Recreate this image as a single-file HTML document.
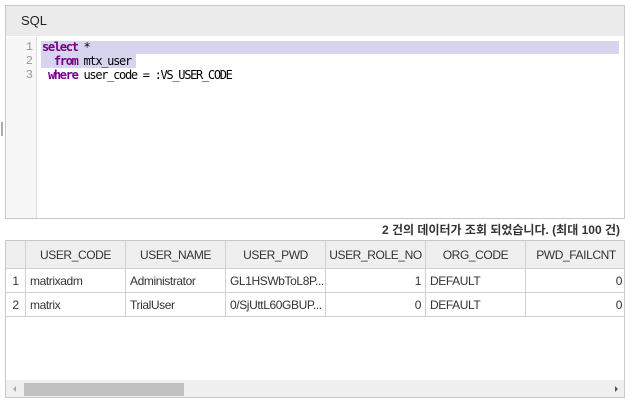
<!DOCTYPE html><html><head><style>
body{margin:0;width:629px;height:400px;background:#fff;font-family:"Liberation Sans","Noto Sans CJK KR",sans-serif;position:relative;overflow:hidden}
.a{position:absolute}
.sql{left:5px;top:5px;width:618px;height:212px;border:1px solid #c8c8c8}
.hd{left:0;top:0;width:618px;height:30px;background:#ebebeb;font-size:13px;line-height:30px;padding-left:15px;box-sizing:border-box;color:#222}
.gut{left:0;top:31px;width:30px;height:181px;background:#f7f7f7;border-right:1px solid #ddd}
.ln{width:27px;text-align:right;font:12px "Liberation Mono",monospace;color:#999}
.code{font:12px "DejaVu Sans Mono",monospace;color:#000;white-space:pre;letter-spacing:-1.3px}
.k{color:#770088;font-weight:bold}
table{border-collapse:collapse;font-size:12px;color:#333;letter-spacing:-0.4px}
td,th{border:1px solid #d0d0d0;height:23px;padding:0 4px;white-space:nowrap;overflow:hidden}
th{background:#efefef;font-weight:normal;height:27px;padding:0 1px}
</style></head><body>
<div class="a" style="left:1px;top:122px;width:2px;height:14px;background:#aaa"></div>
<div class="a sql">
<div class="a hd">SQL</div>
<div class="a gut"></div>
<div class="a" style="left:35px;top:35px;width:578px;height:13px;background:#d7d4f0"></div>
<div class="a" style="left:35px;top:48px;width:95px;height:14px;background:#d7d4f0"></div>
<div class="a ln" style="left:0;top:34px">1</div>
<div class="a ln" style="left:0;top:48px">2</div>
<div class="a ln" style="left:0;top:62px">3</div>
<div class="a code" style="left:36px;top:34px"><span class="k">select</span> *</div>
<div class="a code" style="left:36px;top:48px">  <span class="k">from</span> mtx_user</div>
<div class="a code" style="left:36px;top:62px"> <span class="k">where</span> user_code = :VS_USER_CODE</div>
</div>
<div class="a" style="right:9px;top:221px;font-size:12px;font-weight:bold;color:#333">2 건의 데이터가 조회 되었습니다. (최대 100 건)</div>
<div class="a" style="left:5px;top:240px;width:618px;height:156px;border:1px solid #c8c8c8;overflow:hidden">
<table style="position:absolute;left:-1px;top:-1px;table-layout:fixed;width:621px">
<colgroup><col style="width:20px"><col style="width:100px"><col style="width:100px"><col style="width:100px"><col style="width:100px"><col style="width:100px"><col style="width:101px"></colgroup>
<tr><th></th><th>USER_CODE</th><th>USER_NAME</th><th>USER_PWD</th><th>USER_ROLE_NO</th><th>ORG_CODE</th><th>PWD_FAILCNT</th></tr>
<tr><td style="text-align:center;padding:0">1</td><td>matrixadm</td><td>Administrator</td><td>GL1HSWbToL8P...</td><td style="text-align:right">1</td><td>DEFAULT</td><td style="text-align:right">0</td></tr>
<tr><td style="text-align:center;padding:0">2</td><td>matrix</td><td>TrialUser</td><td>0/SjUttL60GBUP...</td><td style="text-align:right">0</td><td>DEFAULT</td><td style="text-align:right">0</td></tr>
</table>
<div class="a" style="left:0;top:139px;width:618px;height:17px;background:#f0f0f0"></div>
<div class="a" style="left:18px;top:142px;width:160px;height:13px;background:#c1c1c1"></div>
<div class="a" style="left:7px;top:145px;width:0;height:0;border-top:3px solid transparent;border-bottom:3px solid transparent;border-right:3px solid #aaa"></div>
<div class="a" style="left:609px;top:145px;width:0;height:0;border-top:3px solid transparent;border-bottom:3px solid transparent;border-left:3px solid #555"></div>
</div>
</body></html>
